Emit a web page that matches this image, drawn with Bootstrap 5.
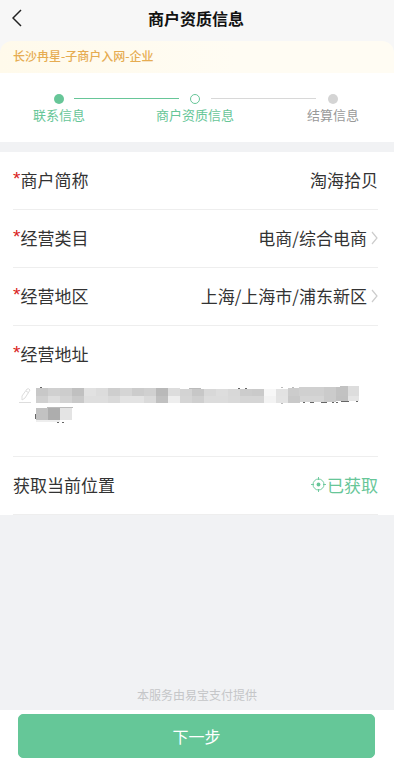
<!DOCTYPE html>
<html lang="zh-CN">
<head>
<meta charset="utf-8">
<meta name="viewport" content="width=device-width, initial-scale=1">
<title>商户资质信息</title>
<link rel="stylesheet" href="https://cdn.jsdelivr.net/npm/bootstrap@5.3.0/dist/css/bootstrap.min.css">
<style>
  body { font-family: "Noto Sans CJK SC", sans-serif; color: #333; font-size: 17px; line-height: 24px; padding-right: 6px; background: #fff; }
  .top-area { background: #f7f7f7; }
  .title-bar { height: 41px; padding-bottom: 5px; display: grid; grid-template-columns: 40px 1fr 42px; align-items: center; }
  .title-bar h1 { font-size: 16px; line-height: 24px; font-weight: 700; color: #111; }
  .notice { background: linear-gradient(90deg, #fffaeb, #fffcf3 60%); color: #e6ac52; font-size: 12px; line-height: 18px; font-weight: 500; padding: 6px 13px 8px; border-radius: 12px 12px 0 0; }
  .steps { display: grid; grid-template-columns: 118px 1fr 122px; padding: 18px 0; font-size: 13px; line-height: 18px; color: #999; }
  .step { display: grid; justify-items: center; }
  .step .dot { width: 10px; height: 10px; border-radius: 50%; background: #d4d4d4; margin: 3px 0 2px; }
  .step.done, .step.current { color: #67c698; }
  .step.done .dot { background: #67c698; }
  .step.current .dot { background: #fff; border: 1px solid #67c698; }
  .step-track { display: grid; grid-template-columns: 1fr 10px 1fr; column-gap: 11px; align-items: center; justify-self: stretch; margin: 0 -44px; }
  .step-track .rail { height: 1px; background: #d8d8d8; }
  .step-track .rail.passed { background: #67c698; }
  .page-gray { background: #f1f2f4; padding-top: 10px; }
  .fields { background: #fff; padding: 0 16px 0 13px; }
  .field-row { min-height: 58px; border-bottom: 1px solid #eee; padding-bottom: 2px; }
  .field-row button { color: #333; font-size: 17px; line-height: 24px; }
  .req { color: #d92020; font-family: "Liberation Sans", sans-serif; font-size: 19px; line-height: 16px; vertical-align: 2px; }
  .plain-input { width: 180px; color: #333; outline: 0; }
  .address-field { border-bottom: 1px solid #eee; padding: 16px 0 31px; }
  .address-value { padding: 20px 0 0 5px; }
  .masked { flex: 0 1 324px; }
  .field-row .locate { color: #67c698; gap: 1px; }
  .provider { font-size: 12px; line-height: 18px; color: #c5c6c8; margin: auto 0 6px; }
  .next-btn { --bs-btn-bg: #65c798; --bs-btn-border-color: #65c798; --bs-btn-color: #fff; --bs-btn-hover-bg: #58b98a; --bs-btn-hover-color: #fff; --bs-btn-active-bg: #50ad80; height: 44px; font-size: 16px; border-radius: 5px; }
  .action-bar { padding: 4px 19px 6px 18px; background: #fff; }
</style>
<script src="https://cdn.jsdelivr.net/npm/bootstrap@5.3.0/dist/js/bootstrap.bundle.min.js"></script>
</head>
<body class="d-flex flex-column min-vh-100">
<header class="top-area">
  <div class="title-bar">
    <button type="button" class="btn p-0 border-0 d-flex ps-2 ms-1" aria-label="返回">
      <svg width="10" height="18" viewBox="0 0 10 18" fill="none" stroke="#222" stroke-width="1.5"><path d="M9 1 1 9l8 8"/></svg>
    </button>
    <h1 class="m-0 text-center">商户资质信息</h1>
  </div>
  <div class="notice">长沙冉星-子商户入网-企业</div>
</header>
<nav class="steps" aria-label="进度">
  <div class="step done"><span class="dot"></span><span>联系信息</span></div>
  <div class="step current">
    <div class="step-track"><span class="rail passed"></span><span class="dot"></span><span class="rail"></span></div>
    <span>商户资质信息</span>
  </div>
  <div class="step"><span class="dot"></span><span>结算信息</span></div>
</nav>
<main class="page-gray flex-grow-1 d-flex flex-column">
  <form class="fields" id="merchant">
    <div class="field-row d-flex align-items-center justify-content-between">
      <label for="shortName"><span class="req">*</span>商户简称</label>
      <input id="shortName" class="plain-input border-0 p-0 bg-transparent text-end" type="text" value="淘海拾贝">
    </div>
    <div class="field-row d-flex align-items-center justify-content-between">
      <label for="category"><span class="req">*</span>经营类目</label>
      <button id="category" type="button" class="btn p-0 border-0 d-flex align-items-center gap-1">电商/综合电商
        <svg width="7" height="14" viewBox="0 0 7 14" fill="none" stroke="#ccc" stroke-width="1.2"><path d="m1 1 5 6-5 6"/></svg></button>
    </div>
    <div class="field-row d-flex align-items-center justify-content-between">
      <label for="region"><span class="req">*</span>经营地区</label>
      <button id="region" type="button" class="btn p-0 border-0 d-flex align-items-center gap-1">上海/上海市/浦东新区
        <svg width="7" height="14" viewBox="0 0 7 14" fill="none" stroke="#ccc" stroke-width="1.2"><path d="m1 1 5 6-5 6"/></svg></button>
    </div>
    <div class="address-field">
      <div><span class="req">*</span>经营地址</div>
      <div class="address-value d-flex">
        <svg class="flex-shrink-0" width="17" height="18" viewBox="0 0 17 18" fill="none" stroke="#ddd"><path d="m4 10 5-7q2-1 3 1l-5 8-3 2zM8 5l3 2M1 16.500h12"/></svg>
        <!-- masked address: two lines of 12px blocks with bits of the covered strokes -->
        <svg class="masked" height="39" viewBox="0 0 324 39" preserveAspectRatio="xMinYMin meet" shape-rendering="crispEdges" role="img" aria-label="地址已隐藏">
          <g fill="#666"><path d="M5 1h2v1H5zM203 2h2v1h-2zM210 2h2v1h-2zM268 16h2v1h-2zM275 16h4v1h-4zM286 16h6v1h-6zM297 16h2v1h-2zM301 16h2v1h-2zM306 15h8v1h-8zM321 15h2v1h-2zM0 28h1v5H0zM22 36h2v1h-2zM27 36h2v1h-2z"/></g>
          <path fill="#bbb" d="M154 2h12v1h-12zM246 1h2v1h-2zM257 1h2v1h-2zM246 17h2v1h-2zM12 21h26v1H12z"/>
          <path fill="#c8c8c8" d="M1 2h12v8H1z"/><path fill="#d0d0d0" d="M13 2h12v8H13z"/><path fill="#cdcdcd" d="M25 2h12v8H25z"/><path fill="#c0c0c0" d="M37 2h12v8H37z"/><path fill="#e1e1e1" d="M49 2h12v8H49z"/><path fill="#dcdcdc" d="M61 2h12v8H61z"/><path fill="#cecece" d="M73 2h12v8H73z"/><path fill="#d5d5d5" d="M85 2h12v8H85z"/><path fill="#ccc" d="M97 2h12v8H97z"/><path fill="#d0d0d0" d="M109 2h12v8h-12z"/><path fill="#b9b9b9" d="M121 2h12v8h-12z"/><path fill="#ddd" d="M133 2h12v8h-12z"/><path fill="#d3d3d3" d="M145 3h12v7h-12z"/>
          <path fill="#c7c7c7" d="M157 3h12v7h-12z"/><path fill="#d8d8d8" d="M169 3h12v7h-12z"/><path fill="#ddd" d="M181 3h12v7h-12z"/><path fill="#d8d8d8" d="M193 3h12v7h-12z"/><path fill="#ccc" d="M205 3h12v7h-12z"/><path fill="#cacaca" d="M217 3h12v7h-12z"/><path fill="#f7f7f7" d="M229 3h12v7h-12z"/><path fill="#e2e2e2" d="M241 3h12v7h-12z"/><path fill="#ccc" d="M253 2h12v8h-12z"/><path fill="#d0d0d0" d="M264 1h25v9h-25z"/><path fill="#cbcbcb" d="M289 1h12v9h-12z"/><path fill="#c2c2c2" d="M301 1h4V0h8v10h-12z"/><path fill="#ddd" d="M313 0h11v10h-11z"/>
          <path fill="#d0d0d0" d="M1 10h12v7H1z"/><path fill="#ddd" d="M13 10h12v7H13z"/><path fill="#d3d3d3" d="M25 10h12v7H25z"/><path fill="#c9c9c9" d="M37 10h12v7H37z"/><path fill="#dedede" d="M49 10h24v7H49z"/><path fill="#d9d9d9" d="M73 10h12v7H73z"/><path fill="#e3e3e3" d="M85 10h24v7H85z"/><path fill="#dadada" d="M109 10h12v7h-12z"/><path fill="#c0c0c0" d="M121 10h12v7h-12z"/><path fill="#eee" d="M133 10h12v7h-12z"/><path fill="#d5d5d5" d="M145 10h12v7h-12z"/>
          <path fill="#cfcfcf" d="M157 10h12v7h-12z"/><path fill="#dcdcdc" d="M169 10h24v7h-24z"/><path fill="#d9d9d9" d="M193 10h12v7h-12z"/><path fill="#d5d5d5" d="M205 10h24v7h-24z"/><path fill="#f3f3f3" d="M229 10h12v7h-12z"/><path fill="#e3e3e3" d="M241 10h12v7h-12z"/><path fill="#c9c9c9" d="M253 10h12v7h-12z"/><path fill="#d5d5d5" d="M265 10h24v6h-24z"/><path fill="#cbcbcb" d="M289 10h12v6h-12z"/><path fill="#c1c1c1" d="M301 10h12v5h-12z"/><path fill="#e5e5e5" d="M313 10h11v5h-11z"/>
          <path fill="#c2c2c2" d="M1 22h12v12H1z"/><path fill="#adadad" d="M13 22h12v12H13z"/><path fill="#e4e4e4" d="M25 22h12v12H25z"/><path fill="#eee" d="M1 34h24v2H1z"/>
        </svg>
      </div>
    </div>
    <div class="field-row d-flex align-items-center justify-content-between">
      <span>获取当前位置</span>
      <button type="button" class="btn p-0 border-0 d-flex align-items-center locate">
        <svg class="flex-shrink-0" width="15" height="15" viewBox="0 0 15 15" fill="none" stroke="#67c698"><circle cx="7.500" cy="7.500" r="5.500" stroke-width=".9"/><circle cx="7.500" cy="7.500" r="1.900" fill="#67c698" stroke="none"/><path stroke-width=".9" d="M7.500 0v3M7.500 12V15M0 7.500h3M12 7.500H15"/></svg>已获取</button>
    </div>
  </form>
  <p class="provider text-center">本服务由易宝支付提供</p>
</main>
<footer class="action-bar"><button type="submit" form="merchant" class="btn next-btn w-100">下一步</button></footer>
</body>
</html>
